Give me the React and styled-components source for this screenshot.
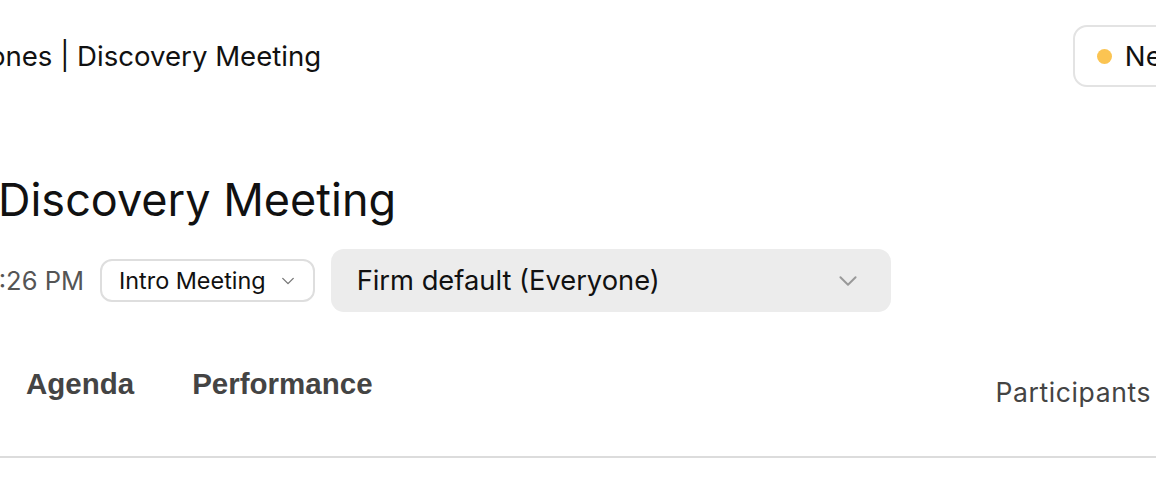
import React from "react";
import styled, { createGlobalStyle } from "styled-components";

const GlobalStyle = createGlobalStyle`
  html, body {
    margin: 0;
    padding: 0;
    background: #ffffff;
  }
  body {
    font-family: Inter, "Liberation Sans", sans-serif;
    color: #111111;
    overflow: hidden;
  }
`;

const Page = styled.div`
  width: 1156px;
  height: 488px;
  overflow: hidden;
  display: flex;
  flex-direction: column;
`;

const Header = styled.header`
  display: flex;
  align-items: center;
  justify-content: space-between;
  margin-top: 25px;
  height: 62px;
`;

const Breadcrumb = styled.div`
  margin-left: ${(p) => p.$shift}px;
  font-size: 27.6px;
  white-space: nowrap;
  color: #111;
`;

const StatusButton = styled.button`
  display: flex;
  align-items: center;
  gap: 13px;
  height: 62px;
  margin-right: -115px;
  padding: 0 22px;
  border: 2px solid #e3e3e3;
  border-radius: 14px;
  background: #fff;
  font-family: inherit;
  font-size: 27.6px;
  color: #111;
  white-space: nowrap;
`;

const Dot = styled.span`
  width: 15px;
  height: 15px;
  border-radius: 50%;
  background: ${(p) => p.$color};
`;

const Title = styled.h1`
  margin: 86px 0 0 ${(p) => p.$shift}px;
  font-size: 45px;
  font-weight: 400;
  line-height: 54px;
  white-space: nowrap;
  color: #111;
`;

const MetaRow = styled.div`
  display: flex;
  align-items: center;
  gap: 16px;
  margin-top: 22px;
`;

const When = styled.span`
  margin-left: ${(p) => p.$shift}px;
  font-size: 25.5px;
  color: #555;
  white-space: nowrap;
`;

const Pill = styled.button`
  display: flex;
  align-items: center;
  gap: 13px;
  height: 43px;
  padding: 0 16px 0 17px;
  border: 2px solid #dedede;
  border-radius: 12px;
  background: #fff;
  font-family: inherit;
  font-size: 23.4px;
  color: #111;
`;

const Select = styled.button`
  display: flex;
  align-items: center;
  justify-content: space-between;
  width: 560px;
  height: 63px;
  padding: 0 30px 0 26px;
  border: none;
  border-radius: 13px;
  background: #ececec;
  font-family: inherit;
  font-size: 27.3px;
  color: #111;
`;

const Chevron = ({ size, color, weight }) => (
  <svg width={size} height={size} viewBox="0 0 24 24" fill="none">
    <path
      d="M5 8.5l7 7 7-7"
      stroke={color}
      strokeWidth={weight}
      strokeLinecap="round"
      strokeLinejoin="round"
    />
  </svg>
);

const TabBar = styled.nav`
  display: flex;
  align-items: flex-end;
  justify-content: space-between;
  margin-top: 58px;
  padding: 0 5px 0 26px;
  height: 88px;
  border-bottom: 2px solid #dcdcdc;
  box-sizing: border-box;
`;

const Tabs = styled.div`
  display: flex;
  gap: 58px;
  padding-bottom: 55px;
`;

const Tab = styled.span`
  font-family: "Liberation Sans", Arial, sans-serif;
  font-weight: 700;
  font-size: 29.5px;
  color: #444;
`;

const Side = styled.span`
  padding-bottom: 48px;
  font-size: 26.5px;
  letter-spacing: 0.6px;
  color: #444;
`;

export default function App() {
  return (
    <>
      <GlobalStyle />
      <Page>
        <Header>
          <Breadcrumb $shift={-110}>Sarah Jones | Discovery Meeting</Breadcrumb>
          <StatusButton>
            <Dot $color="#fbc452" />
            New lead
          </StatusButton>
        </Header>
        <Title $shift={-2}>Discovery Meeting</Title>
        <MetaRow>
          <When $shift={-17}>3:26 PM</When>
          <Pill>
            Intro Meeting
            <Chevron size={18} color="#777" weight={1.8} />
          </Pill>
          <Select>
            Firm default (Everyone)
            <Chevron size={26} color="#999" weight={1.8} />
          </Select>
        </MetaRow>
        <TabBar>
          <Tabs>
            <Tab>Agenda</Tab>
            <Tab>Performance</Tab>
          </Tabs>
          <Side>Participants</Side>
        </TabBar>
      </Page>
    </>
  );
}
